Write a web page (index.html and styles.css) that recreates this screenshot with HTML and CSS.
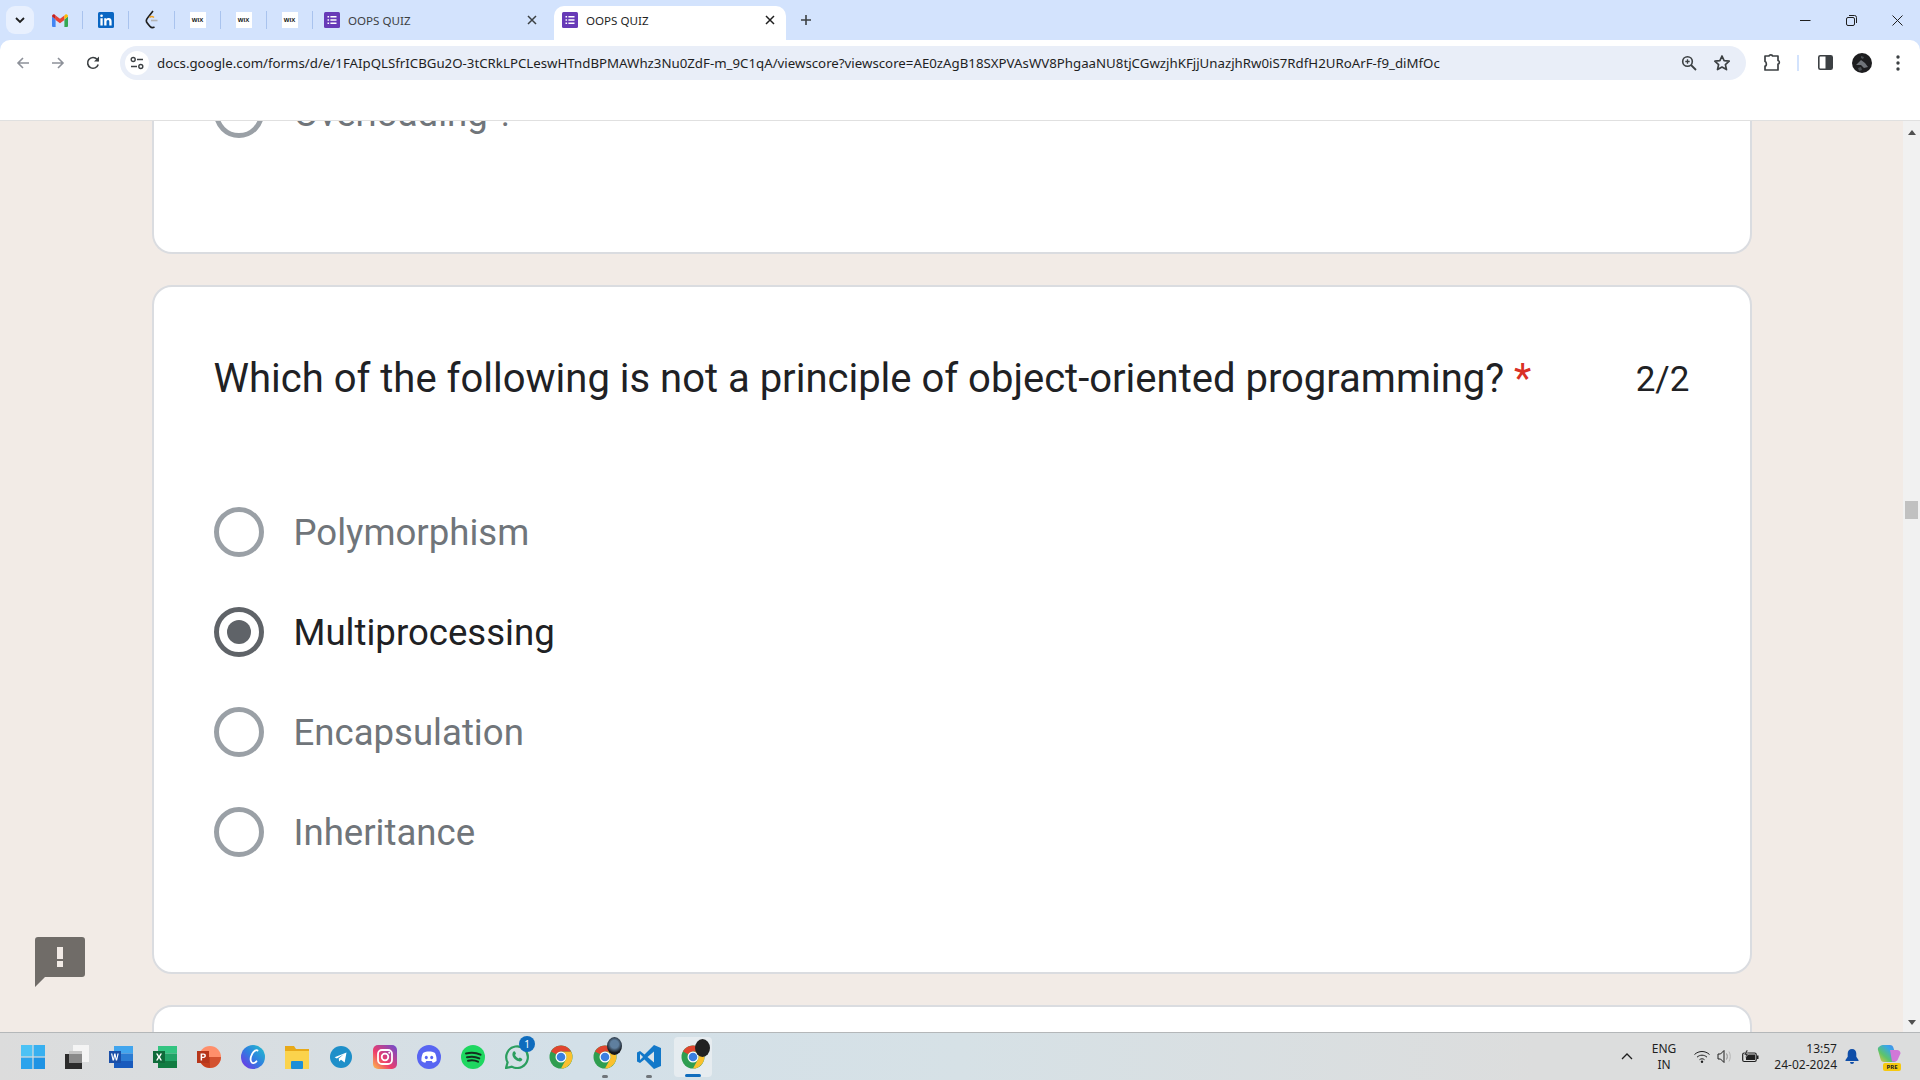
FILE: index.html
```html
<!DOCTYPE html>
<html lang="en">
<head>
  <meta charset="UTF-8" />
  <meta name="viewport" content="width=device-width, initial-scale=1.0" />
  <title>OOPS QUIZ</title>
  <link rel="stylesheet" href="styles.css">
</head>
<body>
  <svg class="defs" width="0" height="0">
    <symbol id="forms" viewBox="0 0 16 16">
      <rect width="16" height="16" rx="1.5" fill="#673ab7"/>
      <path d="M3.5 4h1.6v1.6H3.5zM6.4 4h6.1v1.6H6.4zM3.5 7.2h1.6v1.6H3.5zM6.4 7.2h6.1v1.6H6.4zM3.5 10.4h1.6V12H3.5zM6.4 10.4h6.1V12H6.4z" fill="#fff"/>
    </symbol>
    <symbol id="chrome" viewBox="0 0 24 24">
      <circle cx="12" cy="12" r="11.5" fill="#2f9e50"/>
      <path d="M22 6.500H12a5.500 5.500 0 0 1 4.760 8.250L12 23.500a11.500 11.500 0 0 0 10-17z" fill="#fbc02d"/>
      <path d="M12 .5a11.500 11.500 0 0 1 10 6H12a5.500 5.500 0 0 0-4.760 2.750L2 6.500A11.500 11.500 0 0 1 12 .5z" fill="#e0452f"/>
      <circle cx="12" cy="12" r="5.500" fill="#fff"/>
      <circle cx="12" cy="12" r="4.300" fill="#3b7fe0"/>
    </symbol>
  </svg>

  <div class="tabstrip">
    <div class="tab-search">
      <svg width="10" height="7" viewBox="0 0 10 7"><path d="M1 1l4 4 4-4" fill="none" stroke="#1f1f1f" stroke-width="1.8"/></svg>
    </div>
    <div class="pinned">
      <svg width="16" height="13" viewBox="0 0 16 13">
        <path d="M0 2.5V12a1 1 0 0 0 1 1h2.6V5.6z" fill="#4285f4"/>
        <path d="M16 2.5V12a1 1 0 0 1-1 1h-2.6V5.6z" fill="#34a853"/>
        <path d="M12.4 1.4 8 4.8 3.6 1.4 3.6 6 8 9.3 12.4 6z" fill="#ea4335"/>
        <path d="M0 2.5 3.6 5.6V1.4L2.6.5C1.3-.4 0 .6 0 2.5z" fill="#c5221f"/>
        <path d="M16 2.5 12.4 5.6V1.4l1-.9c1.3-.9 2.6.1 2.600 2z" fill="#fbbc04"/>
      </svg>
    </div>
    <div class="pinned">
      <svg width="16" height="16" viewBox="0 0 16 16">
        <rect width="16" height="16" rx="1.5" fill="#0a66c2"/>
        <path d="M2.4 6.2h2.3v7.4H2.4zM3.55 2.4a1.3 1.3 0 1 1 0 2.7 1.3 1.3 0 0 1 0-2.7zM6.2 6.2h2.2v1c.4-.7 1.2-1.2 2.3-1.2 2.2 0 2.9 1.4 2.9 3.5v4.1h-2.3V10c0-1-.2-1.9-1.3-1.9s-1.5.9-1.5 1.900v3.600H6.200z" fill="#fff"/>
      </svg>
    </div>
    <div class="pinned">
      <svg width="15" height="20" viewBox="0 0 15 20">
        <path d="M9 1 3.500 8c-1.500 1.800-1.500 3.800 0 5.400l2.500 3c1.300 1.400 3 1.500 4.500.4" fill="none" stroke="#1f1f1f" stroke-width="1.600"/>
        <path d="M7 10.500h6.500" stroke="#b3b3b3" stroke-width="1.600"/>
        <path d="M5.500 7.500c1.300-1.200 3-1.200 4.500 0" fill="none" stroke="#f0a020" stroke-width="1.600"/>
      </svg>
    </div>
    <div class="pinned"><span class="wix">WIX</span></div>
    <div class="pinned"><span class="wix">WIX</span></div>
    <div class="pinned"><span class="wix">WIX</span></div>
    <div class="tab">
      <svg width="16" height="16"><use href="#forms"/></svg>
      <span class="tab-title">OOPS QUIZ</span>
      <svg width="10" height="10" viewBox="0 0 10 10"><path d="M1 1l8 8M9 1l-8 8" stroke="#3c4043" stroke-width="1.5"/></svg>
    </div>
    <div class="tab active">
      <svg width="16" height="16"><use href="#forms"/></svg>
      <span class="tab-title">OOPS QUIZ</span>
      <svg width="10" height="10" viewBox="0 0 10 10"><path d="M1 1l8 8M9 1l-8 8" stroke="#1f1f1f" stroke-width="1.5"/></svg>
    </div>
    <div class="new-tab">
      <svg width="12" height="12" viewBox="0 0 12 12"><path d="M6 1v10M1 6h10" stroke="#3c4043" stroke-width="1.6"/></svg>
    </div>
    <div class="window-controls">
      <div class="win-btn"><svg width="11" height="11" viewBox="0 0 11 11"><path d="M0 5.5h10.5" stroke="#1f1f1f" stroke-width="1"/></svg></div>
      <div class="win-btn"><svg width="11" height="11" viewBox="0 0 11 11"><rect x=".5" y="2.5" width="8" height="8" rx="1.5" fill="none" stroke="#1f1f1f"/><path d="M3 .5h5.5a2 2 0 0 1 2 2V8" fill="none" stroke="#1f1f1f"/></svg></div>
      <div class="win-btn"><svg width="11" height="11" viewBox="0 0 11 11"><path d="M.5.5l10 10M10.5.5l-10 10" stroke="#1f1f1f" stroke-width="1"/></svg></div>
    </div>
  </div>

  <div class="toolbar">
    <div class="nav-btn">
      <svg width="16" height="16" viewBox="0 0 16 16"><path d="M14 8H3M8 3 3 8l5 5" fill="none" stroke="#8d9199" stroke-width="1.6"/></svg>
    </div>
    <div class="nav-btn">
      <svg width="16" height="16" viewBox="0 0 16 16"><path d="M2 8h11M8 3l5 5-5 5" fill="none" stroke="#8d9199" stroke-width="1.6"/></svg>
    </div>
    <div class="nav-btn">
      <svg width="16" height="16" viewBox="0 0 16 16"><path d="M13.2 9.500a5.400 5.400 0 1 1-1.100-5.200L13.500 6" fill="none" stroke="#3c4043" stroke-width="1.6"/><path d="M14 1.500V6.600H9z" fill="#3c4043"/></svg>
    </div>
    <div class="omnibox">
      <div class="site-info">
        <svg width="14" height="14" viewBox="0 0 14 14"><circle cx="3.2" cy="3.5" r="2" fill="none" stroke="#3c4043" stroke-width="1.4"/><path d="M7 3.500h6M1 10.500h6" stroke="#3c4043" stroke-width="1.6"/><circle cx="10.8" cy="10.5" r="2" fill="none" stroke="#3c4043" stroke-width="1.4"/></svg>
      </div>
      <span class="url">docs.google.com/forms/d/e/1FAIpQLSfrICBGu2O-3tCRkLPCLeswHTndBPMAWhz3Nu0ZdF-m_9C1qA/viewscore?viewscore=AE0zAgB18SXPVAsWV8PhgaaNU8tjCGwzjhKFjjUnazjhRw0iS7RdfH2URoArF-f9_diMfOc</span>
      <svg class="omni-icon" width="16" height="16" viewBox="0 0 16 16"><circle cx="6.500" cy="6.500" r="4.800" fill="none" stroke="#3c4043" stroke-width="1.6"/><path d="M10 10l5 5" stroke="#3c4043" stroke-width="1.8"/><path d="M6.500 4.300v4.400M4.300 6.500h4.400" stroke="#3c4043" stroke-width="1.3"/></svg>
      <svg class="omni-star" width="18" height="18" viewBox="0 0 18 18"><path d="M9 2l2.100 4.700 5.100.5-3.800 3.400 1.100 5L9 13l-4.500 2.600 1.100-5-3.800-3.400 5.100-.5z" fill="none" stroke="#3c4043" stroke-width="1.7" stroke-linejoin="round"/></svg>
    </div>
    <svg class="tool-ext" width="18" height="18" viewBox="0 0 18 18"><path d="M2 2h4c0-1.500 3.500-1.500 3.500 0H15v4.500c1.800 0 1.800 3.500 0 3.500V16H2v-4c1.800 0 1.800-4 0-4.500z" fill="none" stroke="#3c4043" stroke-width="1.7" stroke-linejoin="round"/></svg>
    <div class="tool-sep"></div>
    <svg class="tool-panel" width="15" height="15" viewBox="0 0 15 15"><rect x=".8" y=".8" width="13.400" height="13.400" rx="1.500" fill="none" stroke="#3c4043" stroke-width="1.600"/><rect x="7.500" y="1" width="6.500" height="13" fill="#3c4043"/></svg>
    <svg class="tool-avatar" width="20" height="20" viewBox="0 0 20 20"><circle cx="10" cy="10" r="10" fill="#1d1d1f"/><path d="M4 12l5-5 4 3 3 4-4 1-3-3z" fill="#70747a"/><path d="M9 3l3 1-1 2-2-1zM6 15l3-1 1 3-3 1z" fill="#4a4e52"/></svg>
    <svg class="tool-menu" width="4" height="16" viewBox="0 0 4 16"><circle cx="2" cy="2" r="1.700" fill="#3c4043"/><circle cx="2" cy="8" r="1.700" fill="#3c4043"/><circle cx="2" cy="14" r="1.700" fill="#3c4043"/></svg>
  </div>

  <div class="viewport">
    <main class="page">
      <section class="card card-cut">
        <div class="option">
          <span class="radio"></span>
          <span class="option-label">Overloading ?</span>
        </div>
      </section>

      <section class="card">
        <div class="question">
          <h2 class="question-text">Which of the following is not a principle of object-oriented programming? <span class="required">*</span></h2>
          <span class="score">2/2</span>
        </div>
        <div class="option">
          <span class="radio"></span>
          <span class="option-label">Polymorphism</span>
        </div>
        <div class="option selected">
          <span class="radio"></span>
          <span class="option-label">Multiprocessing</span>
        </div>
        <div class="option">
          <span class="radio"></span>
          <span class="option-label">Encapsulation</span>
        </div>
        <div class="option">
          <span class="radio"></span>
          <span class="option-label">Inheritance</span>
        </div>
      </section>

      <section class="card card-next"></section>

      <svg class="feedback" width="50" height="50" viewBox="0 0 50 50">
        <path d="M3 0h44a3 3 0 0 1 3 3v34a3 3 0 0 1-3 3H10L0 50V3a3 3 0 0 1 3-3z" fill="#706c68"/>
        <path d="M22 10h6v12h-6zM22 24h6v6h-6z" fill="#f2ebe6"/>
      </svg>
    </main>
    <div class="scrollbar">
      <div class="arrow-up"></div>
      <div class="thumb"></div>
      <div class="arrow-down"></div>
    </div>
  </div>

  <footer class="taskbar">
    <div class="task-icons">
      <div class="task-item">
        <svg width="24" height="24" viewBox="0 0 24 24"><path d="M0 0h11.400v11.400H0z" fill="#4cc2f5"/><path d="M12.600 0H24v11.400H12.600z" fill="#38b0f0"/><path d="M0 12.600h11.400V24H0z" fill="#2ba3ec"/><path d="M12.600 12.600H24V24H12.600z" fill="#1f93e4"/></svg>
      </div>
      <div class="task-item">
        <svg width="24" height="24" viewBox="0 0 24 24"><rect x="8" y="0" width="16" height="17" fill="#f4f4f4"/><rect x="4" y="6" width="13" height="12" fill="#c4c4c4"/><rect x="0" y="9" width="17" height="15" fill="#2b2b2b"/><rect x="4" y="9" width="13" height="9" fill="#8a8a8a"/></svg>
      </div>
      <div class="task-item">
        <svg width="24" height="24" viewBox="0 0 24 24"><rect x="5" y="1" width="19" height="7.500" fill="#41a5ee"/><rect x="5" y="8.500" width="19" height="7.500" fill="#2b7cd3"/><rect x="5" y="16" width="19" height="7" fill="#185abd"/><rect x="0" y="6" width="12" height="12" fill="#1a4fa8"/><path d="M2 8.500h1.300l.9 5 1-5h1.300l1 5 .9-5H9.700l-1.600 7H6.800l-.9-4.300-.9 4.300H3.600z" fill="#fff"/></svg>
      </div>
      <div class="task-item">
        <svg width="24" height="24" viewBox="0 0 24 24"><rect x="5" y="1" width="19" height="7.500" fill="#33c481"/><rect x="5" y="8.500" width="19" height="7.500" fill="#21a366"/><rect x="5" y="16" width="19" height="7" fill="#107c41"/><rect x="0" y="6" width="12" height="12" fill="#0f6b3a"/><path d="M3 8.500h1.700L6 11l1.300-2.500H9L7 12l2 3.500H7.300L6 13l-1.300 2.500H3L5 12z" fill="#fff"/></svg>
      </div>
      <div class="task-item">
        <svg width="24" height="24" viewBox="0 0 24 24"><circle cx="13" cy="12" r="11" fill="#ff8f6b"/><path d="M13 12h11a11 11 0 0 1-11 11z" fill="#d35230"/><path d="M13 12v11A11 11 0 0 1 2 12z" fill="#c43e1c"/><rect x="0" y="6" width="12" height="12" fill="#b7361a"/><path d="M3.600 8.500h2.900c1.600 0 2.400.9 2.400 2.200s-.9 2.200-2.400 2.200H5.100v2.600H3.600zm1.500 1.200v2h1.200c.7 0 1.100-.4 1.100-1s-.4-1-1.100-1z" fill="#fff"/></svg>
      </div>
      <div class="task-item">
        <svg width="24" height="24" viewBox="0 0 24 24"><defs><linearGradient id="canva" x1="0" y1="1" x2="1" y2="0"><stop offset="0" stop-color="#7d2ae8"/><stop offset=".5" stop-color="#2f7fe0"/><stop offset="1" stop-color="#20c4cb"/></linearGradient></defs><circle cx="12" cy="12" r="12" fill="url(#canva)"/><path d="M16.500 5.500c-1-1-3.600.2-5.200 3.200-1.700 3.200-2.200 7-.6 8.800 1.200 1.300 3.300.4 4.800-1.200" fill="none" stroke="#fff" stroke-width="1.800" stroke-linecap="round"/></svg>
      </div>
      <div class="task-item">
        <svg width="24" height="24" viewBox="0 0 24 24"><path d="M0 1h9l2 3h13v5H0z" fill="#e8a918"/><path d="M0 6h24v18H0z" fill="#fbd34c"/><rect x="6" y="16" width="12" height="8" rx="1" fill="#1d8fd8"/></svg>
      </div>
      <div class="task-item">
        <svg width="22" height="24" viewBox="0 0 24 24"><circle cx="12" cy="12" r="12" fill="#1e8fc9"/><path d="M5 12.200 18 7l-2 11-4-3-2 2-.5-3.500L15 9l-7.500 4.500z" fill="#fff"/></svg>
      </div>
      <div class="task-item">
        <svg width="24" height="26" viewBox="0 0 24 24"><defs><linearGradient id="insta" x1="0" y1="1" x2="1" y2="0"><stop offset="0" stop-color="#fdc14d"/><stop offset=".4" stop-color="#ee3d6b"/><stop offset="1" stop-color="#6a4cd1"/></linearGradient></defs><rect width="24" height="24" rx="5" fill="url(#insta)"/><rect x="5" y="5" width="14" height="14" rx="4" fill="none" stroke="#fff" stroke-width="1.800"/><circle cx="12" cy="12" r="3.300" fill="none" stroke="#fff" stroke-width="1.800"/><circle cx="16.200" cy="7.800" r="1" fill="#fff"/></svg>
      </div>
      <div class="task-item">
        <svg width="24" height="24" viewBox="0 0 24 24"><circle cx="12" cy="12" r="12" fill="#5865f2"/><path d="M6 8c2-1.200 4-1.500 6-1.500s4 .3 6 1.500c1.300 2.600 1.800 5.300 1.500 8-1.300 1-2.600 1.500-3.800 1.700l-.9-1.600H9.200l-.9 1.600C7.100 17.500 5.800 17 4.500 16 4.200 13.300 4.700 10.600 6 8z" fill="#fff"/><ellipse cx="9.300" cy="12.500" rx="1.500" ry="1.700" fill="#5865f2"/><ellipse cx="14.700" cy="12.500" rx="1.500" ry="1.700" fill="#5865f2"/></svg>
      </div>
      <div class="task-item">
        <svg width="24" height="24" viewBox="0 0 24 24"><circle cx="12" cy="12" r="12" fill="#1ed760"/><path d="M5 8.500c5-1.300 10-1 14.500 1.200M6 12.300c4.300-1.100 8.500-.8 12.300 1.100M7 15.800c3.500-.9 7-.6 10 .9" fill="none" stroke="#14301f" stroke-width="2" stroke-linecap="round"/></svg>
      </div>
      <div class="task-item">
        <svg width="24" height="24" viewBox="0 0 24 24"><path d="M1 23l1.600-5.600A10.800 10.800 0 1 1 6.800 21.600z" fill="none" stroke="#2b9e5f" stroke-width="2.200"/><path d="M8 7c1-1 2-.8 2.400.2l.6 1.600-1 1.300c.8 1.500 2 2.700 3.600 3.500l1.300-1 1.700.8c.8.400 1 1.300.2 2.200-1.300 1.300-3.200 1.100-5.800-.6C8.300 13.500 6.400 10 8 7z" fill="#2b9e5f"/></svg>
        <span class="badge">1</span>
      </div>
      <div class="task-item">
        <svg width="24" height="24"><use href="#chrome"/></svg>
      </div>
      <div class="task-item running">
        <svg width="24" height="24"><use href="#chrome"/></svg>
        <span class="profile blue"></span>
      </div>
      <div class="task-item running">
        <svg width="24" height="24" viewBox="0 0 24 24"><path d="M17 0 7.500 9.500 3 6 0 7.500v9L3 18l4.500-3.500L17 24l7-3V3z" fill="#1278c9"/><path d="M17 6.500 10.500 12l6.500 5.500z" fill="#dbe3e9"/><path d="M3 9v6l3-3z" fill="#dbe3e9"/></svg>
      </div>
      <div class="task-item current">
        <svg width="24" height="24"><use href="#chrome"/></svg>
        <span class="profile"></span>
      </div>
    </div>

    <div class="tray">
      <svg class="tray-caret" width="12" height="7" viewBox="0 0 12 7"><path d="M1 6l5-5 5 5" fill="none" stroke="#1f1f1f" stroke-width="1.300"/></svg>
      <div class="tray-lang">ENG<br>IN</div>
      <svg class="tray-wifi" width="16" height="13" viewBox="0 0 16 13"><path d="M.5 4.500c4.300-4 10.700-4 15 0M3 7.200c3-2.700 7-2.700 10 0M5.500 9.700c1.500-1.200 3.500-1.200 5 0" fill="none" stroke="#1f1f1f" stroke-width="1"/><circle cx="8" cy="11.800" r="1.200" fill="#1f1f1f"/></svg>
      <svg class="tray-sound" width="16" height="15" viewBox="0 0 16 15"><path d="M1 5h2.500L7 1.500v12L3.500 10H1z" fill="none" stroke="#1f1f1f"/><path d="M9.500 4.500c1 2 1 4 0 6" fill="none" stroke="#8a8a8a"/><path d="M12 2.500c1.700 3.200 1.700 6.800 0 10" fill="none" stroke="#b5b5b5"/></svg>
      <svg class="tray-battery" width="17" height="13" viewBox="0 0 17 13"><rect x=".7" y="3" width="13.500" height="8.500" rx="1.500" fill="none" stroke="#1f1f1f" stroke-width="1.200"/><rect x="4" y="4.500" width="9" height="5.500" fill="#1f1f1f"/><rect x="15" y="5.500" width="1.500" height="3.500" fill="#1f1f1f"/><path d="M4.500 0 2 5h2L2.800 8.500 6.500 3.800h-2L6 0z" fill="#1f1f1f" stroke="#dcdcdc" stroke-width=".5"/></svg>
      <div class="tray-clock">13:57<br>24-02-2024</div>
      <svg class="tray-bell" width="14" height="15" viewBox="0 0 14 15"><path d="M7 0c-2.600 0-4.300 2-4.300 4.600v3.200L.5 11v1h13v-1l-2.200-3.200V4.600C11.300 2 9.600 0 7 0z" fill="#0f4ea8"/><path d="M5 13h4a2 2 0 0 1-4 0z" fill="#0f4ea8"/></svg>
      <div class="tray-copilot">
        <svg width="24" height="20" viewBox="0 0 24 20"><defs><linearGradient id="cop" x1="0" y1="1" x2="1" y2="0"><stop offset="0" stop-color="#f2c53d"/><stop offset=".35" stop-color="#5dc46a"/><stop offset=".7" stop-color="#38a7e8"/><stop offset="1" stop-color="#4f7fe8"/></linearGradient></defs><path d="M7 1h6c2 0 3 1 3.500 3l3 10c.5 2-.5 4-3 4H7c-2 0-3-1-3.500-3L1 6C0 3 4 1 7 1z" fill="url(#cop)"/><path d="M13 6h7c2 0 3.500 1.500 3.500 3.500L21 15c-.5 1.500-1.500 2.500-3 2.500h-3z" fill="#d178d8"/></svg>
        <span class="pre">PRE</span>
      </div>
    </div>
  </footer>
</body>
</html>
```

FILE: styles.css
```css
* {
  box-sizing: border-box;
}

body {
  display: flex;
  flex-direction: column;
  height: 100vh;
  margin: 0;
  overflow: hidden;
  background-color: #d3e3fd;
  font-family: "Noto Sans", "Open Sans", sans-serif;
  color: #1f1f1f;
}

.defs {
  position: absolute;
}

/* tab strip */
.tabstrip {
  display: flex;
  align-items: flex-end;
  height: 40px;
  padding-left: 6px;
}

.tab-search {
  display: flex;
  align-items: center;
  justify-content: center;
  width: 28px;
  height: 28px;
  margin: 0 3px 6px 0;
  border-radius: 9px;
  background-color: #e8f0fe;
}

.pinned {
  display: flex;
  align-items: center;
  justify-content: center;
  width: 46px;
  height: 18px;
  margin-bottom: 11px;
  border-right: 1px solid #a9c3ee;
}

.wix {
  display: block;
  width: 16px;
  height: 16px;
  background-color: #fff;
  color: #111;
  font-family: "Liberation Sans", sans-serif;
  font-size: 6px;
  font-weight: bold;
  line-height: 16px;
  text-align: center;
}

.tab {
  display: flex;
  align-items: center;
  gap: 8px;
  width: 241px;
  height: 34px;
  padding: 0 17px 6px 11px;
  font-size: 11.600px;
  color: #3c4043;
}

.tab-title {
  flex: 1;
}

.tab.active {
  width: 232px;
  padding: 0 11px 6px 8px;
  border-radius: 10px 10px 0 0;
  background-color: #fff;
  color: #1f1f1f;
}

.new-tab {
  display: flex;
  align-items: center;
  justify-content: center;
  width: 40px;
  height: 34px;
  padding-bottom: 6px;
}

.window-controls {
  display: flex;
  align-self: flex-start;
  margin-left: auto;
}

.win-btn {
  display: flex;
  align-items: center;
  justify-content: center;
  width: 46px;
  height: 40px;
}

/* toolbar */
.toolbar {
  display: flex;
  align-items: flex-start;
  height: 81px;
  padding: 6px 0 0 5px;
  border-bottom: 1px solid #e0e0e0;
  border-radius: 10px 10px 0 0;
  background-color: #fff;
}

.nav-btn {
  display: flex;
  align-items: center;
  justify-content: center;
  width: 35px;
  height: 34px;
}

.omnibox {
  display: flex;
  align-items: center;
  width: 1626px;
  height: 34px;
  margin-left: 10px;
  padding: 0 15px 0 5px;
  border-radius: 17px;
  background-color: #e9eef8;
}

.site-info {
  display: flex;
  align-items: center;
  justify-content: center;
  width: 24px;
  height: 24px;
  margin-right: 8px;
  border-radius: 50%;
  background-color: #fff;
}

.url {
  flex: 1;
  font-size: 13.280px;
  white-space: nowrap;
  color: #1f1f1f;
}

.omni-icon {
  margin-right: 16px;
}

.tool-ext {
  margin: 8px 0 0 17px;
}

.tool-sep {
  width: 2px;
  height: 16px;
  margin: 9px 19px 0 16px;
  background-color: #d3e3fd;
}

.tool-panel {
  margin-top: 9px;
}

.tool-avatar {
  margin: 7px 0 0 19px;
}

.tool-menu {
  margin: 9px 0 0 24px;
}

/* form area */
.viewport {
  display: flex;
  flex: 1;
  min-height: 0;
}

.page {
  position: relative;
  flex: 1;
  overflow: hidden;
  display: flex;
  flex-direction: column;
  align-items: center;
  gap: 31px;
  background-color: #f2ebe6;
}

.card {
  flex-shrink: 0;
  width: 1600px;
  padding: 60px 60px 90px;
  border: 2.5px solid #dadce0;
  border-radius: 20px;
  background-color: #fff;
}

.card-cut {
  margin-top: -58px;
  padding-top: 0;
  padding-bottom: 89px;
  border-top: none;
}

.card-next {
  height: 200px;
}

.question {
  display: flex;
  justify-content: space-between;
  align-items: flex-start;
  height: 135px;
  padding-top: 2px;
}

.question-text {
  margin: 0;
  font-family: Roboto, sans-serif;
  font-size: 40px;
  font-weight: 400;
  line-height: 60px;
  color: #202124;
}

.required {
  color: #d93025;
}

.score {
  font-family: Roboto, sans-serif;
  font-size: 35px;
  line-height: 62px;
  color: #202124;
}

.option {
  display: flex;
  align-items: center;
  gap: 30px;
  height: 100px;
}

.radio {
  position: relative;
  width: 50px;
  height: 50px;
  border: 5px solid #9aa0a6;
  border-radius: 50%;
}

.option-label {
  font-family: Roboto, sans-serif;
  font-size: 36.600px;
  color: #70757a;
}

.selected .radio {
  border-color: #5f6368;
}

.selected .radio::after {
  content: "";
  position: absolute;
  top: 8px;
  left: 8px;
  width: 24px;
  height: 24px;
  border-radius: 50%;
  background-color: #5f6368;
}

.selected .option-label {
  color: #202124;
}

.feedback {
  position: absolute;
  left: 35px;
  top: 816px;
}

.scrollbar {
  display: flex;
  flex-direction: column;
  align-items: center;
  width: 17px;
  padding-top: 9px;
  background-color: #f1f1f1;
}

.arrow-up {
  width: 0;
  height: 0;
  border: 4px solid transparent;
  border-top: none;
  border-bottom: 5px solid #505050;
}

.thumb {
  width: 13px;
  height: 18px;
  margin-top: 366px;
  background-color: #c1c1c1;
}

.arrow-down {
  width: 0;
  height: 0;
  margin-top: auto;
  margin-bottom: 7px;
  border: 4px solid transparent;
  border-bottom: none;
  border-top: 5px solid #505050;
}

/* windows taskbar */
.taskbar {
  display: flex;
  justify-content: space-between;
  height: 48px;
  padding-left: 11px;
  border-top: 1px solid #b4b7b9;
  background: linear-gradient(90deg, #dcdcdc 0%, #d3e0e8 30%, #d6e1e6 50%, #dcdddd 80%);
}

.task-icons {
  display: flex;
}

.task-item {
  position: relative;
  display: flex;
  align-items: center;
  justify-content: center;
  width: 44px;
  height: 47px;
}

.task-item.running::after,
.task-item.current::after {
  content: "";
  position: absolute;
  bottom: 2px;
  left: 19px;
  width: 6px;
  height: 3px;
  border-radius: 2px;
  background-color: #70757a;
}

.task-item.current {
  width: 38px;
  height: 40px;
  margin: 4px 0 0 3px;
  border-radius: 4px;
  background-color: #e6ecf0;
}

.task-item.current::after {
  left: 11px;
  bottom: 0;
  width: 16px;
  background-color: #0f6cbd;
}

.badge {
  position: absolute;
  top: 3px;
  right: 4px;
  width: 16px;
  height: 16px;
  border-radius: 50%;
  background-color: #0f6cbd;
  color: #fff;
  font-size: 10px;
  line-height: 16px;
  text-align: center;
}

.profile {
  position: absolute;
  top: 4px;
  right: 5px;
  width: 15px;
  height: 18px;
  border-radius: 50%;
  background-color: #222;
}

.profile.blue {
  background: radial-gradient(circle at 50% 40%, #5f7f9f 30%, #15181c 65%);
}

.current .profile {
  top: 2px;
  right: 2px;
}

.tray {
  display: flex;
  align-items: center;
  height: 47px;
  font-size: 12px;
  line-height: 16px;
  color: #1f1f1f;
}

.tray-lang {
  width: 40px;
  margin-left: 11px;
  text-align: center;
}

.tray-wifi {
  margin-left: 10px;
}

.tray-sound {
  margin-left: 7px;
}

.tray-battery {
  margin-left: 9px;
}

.tray-clock {
  width: 70px;
  margin-left: 8px;
  text-align: right;
}

.tray-bell {
  margin-left: 8px;
}

.tray-copilot {
  position: relative;
  width: 24px;
  height: 26px;
  margin: 0 19px 0 18px;
}

.pre {
  position: absolute;
  bottom: -1px;
  right: 0;
  width: 18px;
  height: 8px;
  border-radius: 2px;
  background-color: #f6c90e;
  color: #222;
  font-size: 6px;
  font-weight: bold;
  line-height: 8px;
  text-align: center;
}
```
